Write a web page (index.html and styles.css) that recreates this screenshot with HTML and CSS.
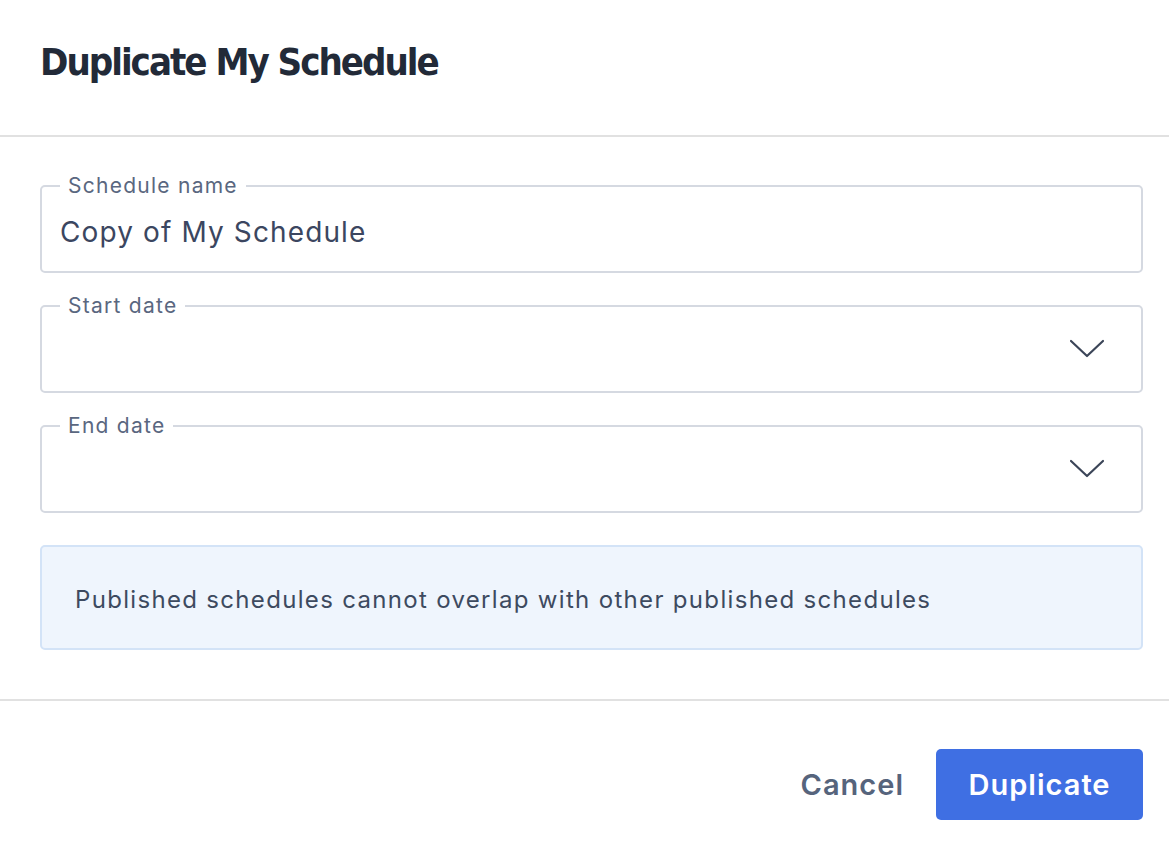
FILE: index.html
```html
<!DOCTYPE html>
<html lang="en">
<head>
<meta charset="utf-8">
<title>Duplicate My Schedule</title>
<link rel="stylesheet" href="styles.css">
</head>
<body>
<div class="dialog">
  <header class="dialog-header">
    <h1 class="dialog-title">Duplicate My Schedule</h1>
  </header>
  <main class="dialog-body">
    <fieldset class="field">
      <legend class="field-label">Schedule name</legend>
      <div class="field-control">
        <span class="field-value">Copy of My Schedule</span>
      </div>
    </fieldset>
    <fieldset class="field">
      <legend class="field-label">Start date</legend>
      <div class="field-control">
        <span class="field-value"></span>
        <svg class="chevron" width="36" height="20" viewBox="0 0 36 20" aria-hidden="true"><path d="M2 2 L18 17 L34 2" fill="none" stroke="#3b4558" stroke-width="2.2" stroke-linecap="round" stroke-linejoin="round"/></svg>
      </div>
    </fieldset>
    <fieldset class="field field-last">
      <legend class="field-label">End date</legend>
      <div class="field-control">
        <span class="field-value"></span>
        <svg class="chevron" width="36" height="20" viewBox="0 0 36 20" aria-hidden="true"><path d="M2 2 L18 17 L34 2" fill="none" stroke="#3b4558" stroke-width="2.2" stroke-linecap="round" stroke-linejoin="round"/></svg>
      </div>
    </fieldset>
    <div class="info">Published schedules cannot overlap with other published schedules</div>
  </main>
  <footer class="dialog-footer">
    <button class="btn btn-text" type="button">Cancel</button>
    <button class="btn btn-primary" type="button">Duplicate</button>
  </footer>
</div>
</body>
</html>
```
FILE: styles.css
```css
* { box-sizing: border-box; }
html, body { margin: 0; padding: 0; background: #fff; }
body {
  font-family: Inter, "Noto Sans", "Liberation Sans", sans-serif;
  color: #3b4660;
  width: 1169px;
  height: 856px;
  overflow: hidden;
}
.dialog-header {
  height: 137px;
  border-bottom: 2px solid #e1e1e1;
  padding: 38px 40px 0;
}
.dialog-title {
  margin: 0;
  font-family: "DejaVu Sans Condensed", "Liberation Sans", sans-serif;
  font-weight: 700;
  font-size: 38px;
  line-height: 48px;
  letter-spacing: -2px;
  color: #222a38;
}
.dialog-body {
  padding: 37px 26px 0 40px;
  display: flex;
  flex-direction: column;
}
.field {
  margin: 0 0 21px;
  padding: 0 18px;
  border: 2px solid #d5d9e1;
  border-radius: 5px;
  min-width: 0;
}
.field-last { margin-bottom: 32px; }
.field-label {
  padding: 0 8px;
  margin-left: 0;
  font-size: 21px;
  line-height: 24px;
  letter-spacing: 0.06em;
  color: #5a6780;
}
.field-control {
  height: 73px;
  display: flex;
  align-items: center;
  justify-content: space-between;
  padding-bottom: 6px;
}
.field-value {
  font-size: 28px;
  line-height: 34px;
  letter-spacing: 0.04em;
  color: #3b4660;
}
.chevron { margin-right: 18px; margin-top: -6px; }
.info {
  height: 105px;
  background: #eff5fd;
  border: 2px solid #d3e3f7;
  border-radius: 5px;
  display: flex;
  align-items: center;
  padding: 4px 33px 0;
  font-size: 24px;
  color: #3d4a60;
  letter-spacing: 0.055em;
}
.dialog-footer {
  margin-top: 49px;
  border-top: 2px solid #e1e1e1;
  padding: 48px 26px 0 40px;
  display: flex;
  justify-content: flex-end;
  align-items: center;
  gap: 32px;
}
.btn {
  font-family: Inter, "Noto Sans", "Liberation Sans", sans-serif;
  font-size: 29px;
  font-weight: 600;
  letter-spacing: 0.035em;
  border: 0;
  cursor: pointer;
}
.btn-text {
  background: transparent;
  color: #56647c;
  padding: 0;
}
.btn-primary {
  background: #3f6fe3;
  color: #fff;
  width: 207px;
  height: 71px;
  border-radius: 5px;
}
```
